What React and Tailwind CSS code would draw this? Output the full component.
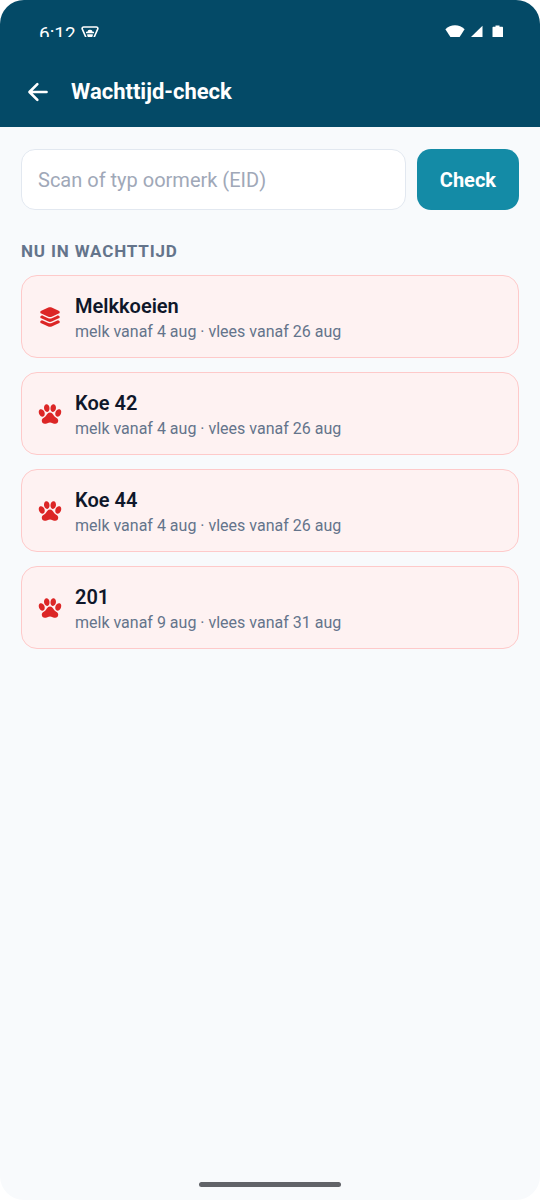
import { useState } from 'react';
import { IoArrowBack, IoLayers, IoPaw } from 'react-icons/io5';

const withdrawals = [
    { id: 1, type: 'group', name: 'Melkkoeien', milk: '4 aug', meat: '26 aug' },
    { id: 2, type: 'animal', name: 'Koe 42', milk: '4 aug', meat: '26 aug' },
    { id: 3, type: 'animal', name: 'Koe 44', milk: '4 aug', meat: '26 aug' },
    { id: 4, type: 'animal', name: '201', milk: '9 aug', meat: '31 aug' },
];

function StatusBar() {
    return (
        <div className="flex h-[37px] items-start justify-between overflow-hidden pr-9 pl-[39px] pt-6 text-white">
            <div className="flex items-start gap-[5px]">
                <span className="text-[19px] leading-5">6:12</span>
                <svg width="18" height="18" viewBox="0 0 18 18" fill="none" className="mt-[2px]">
                    <path
                        d="M2.800 1h12.400c1.300 0 2 1 1.500 2.200l-3.700 8.300c-1.400 3.300-6.600 3.300-8 0L1.300 3.200C.8 2 1.500 1 2.800 1z"
                        stroke="currentColor"
                        strokeWidth="1.600"
                    />
                    <path d="M6.500 5.200a2.600 2 0 0 1 5 0v.6H13v1.500H5V5.800h1.500zM6.200 8.200h5.600v1.200l-1 2.600H7.200l-1-2.600z" fill="currentColor" />
                </svg>
            </div>
            <div className="flex items-start">
                <svg width="20" height="16" viewBox="0 0 20 16" fill="currentColor" className="mt-px">
                    <path d="M10 .3c3.700 0 7 1.500 9.600 4L12 16H8L.4 4.300C3 1.800 6.300.3 10 .3z" />
                </svg>
                <svg width="12" height="12" viewBox="0 0 12 12" fill="currentColor" className="ml-[6px] mt-px">
                    <path d="M11.500.8V12H0z" />
                </svg>
                <svg width="12" height="18" viewBox="0 0 12 18" fill="currentColor" className="ml-[9px] mt-px">
                    <path d="M3.500.5h4v1.300H10c.6 0 1 .4 1 1V18H.5V2.800c0-.6.400-1 1-1h2z" />
                </svg>
            </div>
        </div>
    );
}

function WithdrawalCard({ item }) {
    const Icon = item.type === 'group' ? IoLayers : IoPaw;

    return (
        <li className="flex items-center gap-[13px] rounded-2xl border border-[#fecaca] bg-[#fef2f2] px-4 py-[15px]">
            <Icon className="size-6 shrink-0 text-[#dc2626]" />
            <div className="min-w-0">
                <h3 className="text-[20px] leading-[30px] font-semibold text-[#0f172a]">{item.name}</h3>
                <p className="text-[16px] leading-[21px] text-[#64748b]">
                    melk vanaf {item.milk} · vlees vanaf {item.meat}
                </p>
            </div>
        </li>
    );
}

export default function App() {
    const [eid, setEid] = useState('');

    return (
        <div className="min-h-screen bg-white font-['Roboto',sans-serif]">
            <div className="flex min-h-screen flex-col overflow-hidden rounded-3xl bg-[#f8fafc]">
                <header className="bg-[#044a67] text-white">
                    <StatusBar />
                    <div className="flex items-center gap-[19px] px-6 pt-10 pb-5">
                        <button type="button" aria-label="Terug">
                            <IoArrowBack className="size-7" />
                        </button>
                        <h1 className="text-[22px] leading-[30px] font-bold">Wachttijd-check</h1>
                    </div>
                </header>

                <main className="flex-1 px-[21px] pt-[22px]">
                    <form className="flex gap-[11px]" onSubmit={(e) => e.preventDefault()}>
                        <input
                            type="text"
                            aria-label="Oormerk (EID)"
                            placeholder="Scan of typ oormerk (EID)"
                            value={eid}
                            onChange={(e) => setEid(e.target.value)}
                            className="h-[61px] min-w-0 flex-1 rounded-[14px] border border-[#e2e8f0] bg-white px-4 text-[20px] text-[#0f172a] outline-none placeholder:text-[#a0a8b8]"
                        />
                        <button type="submit" className="rounded-[14px] bg-[#148ba6] px-[23px] text-[20px] font-bold text-white">
                            Check
                        </button>
                    </form>

                    <h2 className="mt-[29px] text-[17px] leading-6 font-bold tracking-wider text-[#64748b] uppercase">
                        Nu in wachttijd
                    </h2>
                    <ul className="mt-3 flex flex-col gap-[14px]">
                        {withdrawals.map((item) => (
                            <WithdrawalCard key={item.id} item={item} />
                        ))}
                    </ul>
                </main>

                <div className="flex justify-center pb-[13px]">
                    <div className="h-[5px] w-[142px] rounded-full bg-[#616368]" />
                </div>
            </div>
        </div>
    );
}
